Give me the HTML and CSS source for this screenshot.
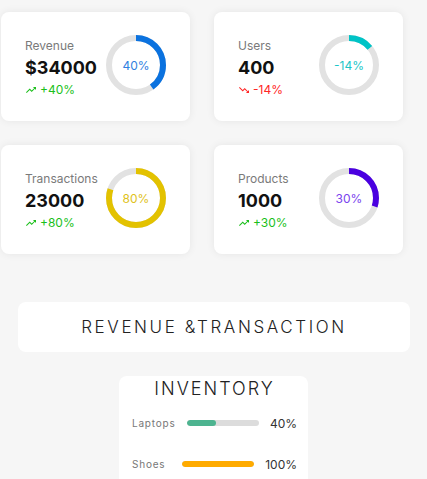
FILE: index.html
```html
<!DOCTYPE html>
<html lang="en">
<head>
<meta charset="utf-8">
<title>Dashboard</title>
<link rel="stylesheet" href="styles.css">
</head>
<body>
<div class="page">
  <div class="stats">
    <div class="card">
      <div class="info">
        <div class="label">Revenue</div>
        <div class="value">$34000</div>
        <div class="change up"><svg class="trend" viewBox="0 0 24 24"><path d="M16 6l2.29 2.29-4.88 4.88-4-4L2 16.590 3.41 18l6-6 4 4 6.3-6.29L22 12V6z"/></svg>+40%</div>
      </div>
      <div class="ring blue">
        <svg viewBox="0 0 60 60"><circle class="track" cx="30" cy="30" r="27"/><circle class="bar" cx="30" cy="30" r="27" stroke-dasharray="67.86 169.65"/></svg>
        <span>40%</span>
      </div>
    </div>
    <div class="card">
      <div class="info">
        <div class="label">Users</div>
        <div class="value">400</div>
        <div class="change down"><svg class="trend" viewBox="0 0 24 24"><path d="M16 18l2.29-2.29-4.88-4.88-4 4L2 7.41 3.41 6l6 6 4-4 6.3 6.29L22 12v6z"/></svg>-14%</div>
      </div>
      <div class="ring teal">
        <svg viewBox="0 0 60 60"><circle class="track" cx="30" cy="30" r="27"/><circle class="bar" cx="30" cy="30" r="27" stroke-dasharray="23.75 169.65"/></svg>
        <span>-14%</span>
      </div>
    </div>
    <div class="card">
      <div class="info">
        <div class="label">Transactions</div>
        <div class="value">23000</div>
        <div class="change up"><svg class="trend" viewBox="0 0 24 24"><path d="M16 6l2.29 2.29-4.88 4.88-4-4L2 16.59 3.41 18l6-6 4 4 6.3-6.29L22 12V6z"/></svg>+80%</div>
      </div>
      <div class="ring yellow">
        <svg viewBox="0 0 60 60"><circle class="track" cx="30" cy="30" r="27"/><circle class="bar" cx="30" cy="30" r="27" stroke-dasharray="135.72 169.65"/></svg>
        <span>80%</span>
      </div>
    </div>
    <div class="card">
      <div class="info">
        <div class="label">Products</div>
        <div class="value">1000</div>
        <div class="change up"><svg class="trend" viewBox="0 0 24 24"><path d="M16 6l2.29 2.29-4.88 4.88-4-4L2 16.59 3.41 18l6-6 4 4 6.3-6.29L22 12V6z"/></svg>+30%</div>
      </div>
      <div class="ring purple">
        <svg viewBox="0 0 60 60"><circle class="track" cx="30" cy="30" r="27"/><circle class="bar" cx="30" cy="30" r="27" stroke-dasharray="50.89 169.65"/></svg>
        <span>30%</span>
      </div>
    </div>
  </div>

  <div class="banner">REVENUE &amp;TRANSACTION</div>

  <div class="inventory">
    <div class="inv-title">INVENTORY</div>
    <div class="inv-row">
      <span class="inv-label">Laptops</span>
      <div class="inv-right">
        <div class="inv-bar"><div class="inv-fill green" style="width:40%"></div></div>
        <span class="inv-pct">40%</span>
      </div>
    </div>
    <div class="inv-row">
      <span class="inv-label">Shoes</span>
      <div class="inv-right">
        <div class="inv-bar"><div class="inv-fill orange" style="width:100%"></div></div>
        <span class="inv-pct">100%</span>
      </div>
    </div>
  </div>
</div>
</body>
</html>
```

FILE: styles.css
```css
* { box-sizing: border-box; }
html, body { margin: 0; padding: 0; }
body {
  background: #f6f6f6;
  font-family: Inter, "Noto Sans", sans-serif;
  color: #111;
  overflow: hidden;
}
.page {
  padding-top: 12px;
}
.stats {
  display: grid;
  grid-template-columns: 189px 189px;
  grid-auto-rows: 109px;
  column-gap: 24px;
  row-gap: 24px;
  margin-left: 1px;
}
.card {
  background: #fff;
  border-radius: 8px;
  box-shadow: 0 0 8px rgba(0, 0, 0, 0.07);
  display: flex;
  align-items: center;
  justify-content: space-between;
  padding: 2px 24px 0 24px;
}
.info { display: flex; flex-direction: column; }
.label {
  font-size: 12px;
  line-height: 16px;
  color: #7a7a7a;
  margin-bottom: 2px;
}
.value {
  font-size: 18px;
  line-height: 24px;
  font-weight: 700;
  color: #111;
}
.change {
  font-size: 12px;
  line-height: 16px;
  margin-top: 2px;
  display: flex;
  align-items: center;
  gap: 3px;
}
.change.up { color: #1bbf1b; }
.change.down { color: #ff2626; }
.trend { width: 12px; height: 12px; fill: currentColor; }
.ring {
  position: relative;
  width: 60px;
  height: 60px;
  flex: none;
  margin-bottom: 5px;
}
.ring svg { width: 60px; height: 60px; display: block; transform: rotate(-90deg); }
.ring circle { fill: none; stroke-width: 6; }
.ring .track { stroke: #e2e2e2; }
.ring span {
  position: absolute;
  inset: 0;
  display: flex;
  align-items: center;
  justify-content: center;
  font-size: 12px;
}
.ring.blue .bar { stroke: #0b72df; }
.ring.blue span { color: #2f80e0; }
.ring.teal .bar { stroke: #00c3c6; }
.ring.teal span { color: #1cc6c8; }
.ring.yellow .bar { stroke: #e3c200; }
.ring.yellow span { color: #e0c21a; }
.ring.purple .bar { stroke: #4a00e0; }
.ring.purple span { color: #7a44ee; }

.banner {
  width: 392px;
  height: 50px;
  margin: 48px 0 0 18px;
  background: #fff;
  border-radius: 8px;
  display: flex;
  align-items: center;
  justify-content: center;
  font-size: 17px;
  font-weight: 300;
  letter-spacing: 2.6px;
  color: #222;
}
.inventory {
  width: 189px;
  margin: 24px 0 0 119px;
  background: #fff;
  border-radius: 8px;
  padding: 2px 11px 20px 13px;
  height: 140px;
}
.inv-title {
  text-align: center;
  font-size: 18px;
  line-height: 22px;
  font-weight: 300;
  letter-spacing: 2px;
  color: #222;
  margin-bottom: 15px;
}
.inv-row {
  display: flex;
  align-items: center;
  justify-content: space-between;
  height: 16px;
  margin-bottom: 25px;
}
.inv-label {
  font-size: 10px;
  letter-spacing: 0.8px;
  color: #777;
}
.inv-right {
  display: flex;
  align-items: center;
  gap: 11px;
}
.inv-bar {
  width: 72px;
  height: 6px;
  border-radius: 3px;
  background: #dcdcdc;
  overflow: hidden;
}
.inv-fill { height: 100%; border-radius: 3px; }
.inv-fill.green { background: #4db490; }
.inv-fill.orange { background: #ffab00; }
.inv-pct {
  font-size: 12px;
  color: #333;
}
```
